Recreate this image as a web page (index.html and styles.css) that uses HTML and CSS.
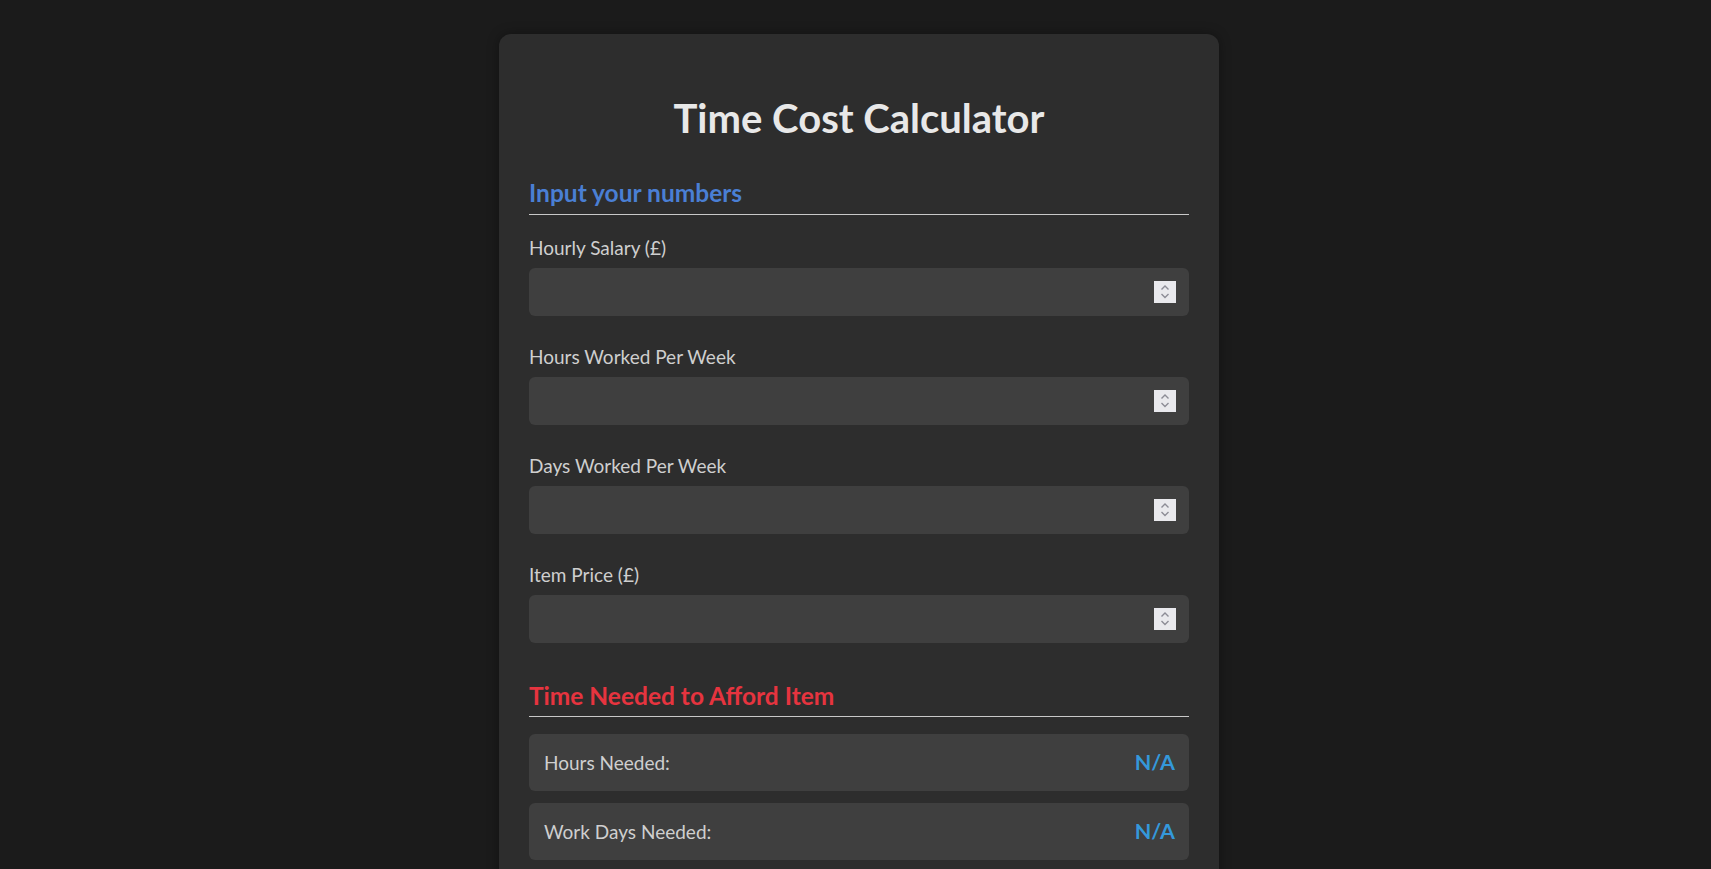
FILE: index.html
```html
<!DOCTYPE html>
<html lang="en">
<head>
<meta charset="utf-8">
<title>Time Cost Calculator</title>
<link rel="stylesheet" href="styles.css">
</head>
<body>
<main class="card">
  <h1 class="title">Time Cost Calculator</h1>

  <section class="section">
    <h2 class="section-heading heading-blue">Input your numbers</h2>

    <div class="group">
      <label class="label" for="salary">Hourly Salary (£)</label>
      <div class="field">
        <input class="field-input" id="salary" type="text">
        <svg class="spin" width="22" height="22" viewBox="0 0 22 22"><path d="M7.5 8.5 L11 5 L14.5 8.5 M7.5 13 L11 16.5 L14.5 13" fill="none" stroke="#8c8c96" stroke-width="1.4"/></svg>
      </div>
    </div>

    <div class="group">
      <label class="label" for="hours">Hours Worked Per Week</label>
      <div class="field">
        <input class="field-input" id="hours" type="text">
        <svg class="spin" width="22" height="22" viewBox="0 0 22 22"><path d="M7.5 8.5 L11 5 L14.5 8.5 M7.5 13 L11 16.5 L14.5 13" fill="none" stroke="#8c8c96" stroke-width="1.4"/></svg>
      </div>
    </div>

    <div class="group">
      <label class="label" for="days">Days Worked Per Week</label>
      <div class="field">
        <input class="field-input" id="days" type="text">
        <svg class="spin" width="22" height="22" viewBox="0 0 22 22"><path d="M7.5 8.5 L11 5 L14.5 8.5 M7.5 13 L11 16.5 L14.5 13" fill="none" stroke="#8c8c96" stroke-width="1.4"/></svg>
      </div>
    </div>

    <div class="group">
      <label class="label" for="price">Item Price (£)</label>
      <div class="field">
        <input class="field-input" id="price" type="text">
        <svg class="spin" width="22" height="22" viewBox="0 0 22 22"><path d="M7.5 8.5 L11 5 L14.5 8.5 M7.5 13 L11 16.5 L14.5 13" fill="none" stroke="#8c8c96" stroke-width="1.4"/></svg>
      </div>
    </div>
  </section>

  <section class="section results">
    <h2 class="section-heading heading-red">Time Needed to Afford Item</h2>
    <div class="result">
      <span class="result-label">Hours Needed:</span>
      <span class="result-value">N/A</span>
    </div>
    <div class="result">
      <span class="result-label">Work Days Needed:</span>
      <span class="result-value">N/A</span>
    </div>
  </section>
</main>
</body>
</html>
```

FILE: styles.css
```css
* {
  box-sizing: border-box;
}

html, body {
  margin: 0;
  padding: 0;
}

body {
  background: #1b1b1b;
  font-family: Lato, "Open Sans", "Liberation Sans", sans-serif;
  color: #cfcfcf;
  display: flex;
  justify-content: center;
  padding: 34px 0 40px 7px;
}

.card {
  width: 720px;
  background: #2d2d2d;
  border-radius: 12px;
  padding: 30px 30px 30px;
  box-shadow: 0 0 12px rgba(0, 0, 0, 0.35);
}

.title {
  margin: 30px 0 36px;
  font-size: 40px;
  line-height: 48px;
  font-weight: 700;
  text-align: center;
  color: #e8e8e8;
}

.section {
  display: flow-root;
}

.section-heading {
  margin: 0 0 21px;
  font-size: 24.5px;
  line-height: 30px;
  font-weight: 700;
  padding-bottom: 6px;
  border-bottom: 1px solid #c8c8c8;
}

.heading-blue {
  color: #4a7fd4;
}

.heading-red {
  color: #e6343f;
}

.results .section-heading {
  margin-top: 9px;
  margin-bottom: 17px;
  padding-bottom: 5px;
}

.group {
  margin-bottom: 29px;
}

.label {
  display: block;
  font-size: 19px;
  line-height: 23px;
  margin-bottom: 9px;
  color: #cfcfcf;
}

.field {
  display: flex;
  align-items: center;
  height: 48px;
  padding: 0 13px 0 12px;
  background: #3f3f3f;
  border-radius: 6px;
}

.field-input {
  flex: 1;
  min-width: 0;
  background: transparent;
  border: none;
  outline: none;
  color: #e6e6e6;
  font: inherit;
  font-size: 17px;
}

.spin {
  display: block;
  flex: none;
  background: #e9e9ed;
}

.result {
  display: flex;
  justify-content: space-between;
  align-items: center;
  padding: 18px 14px 18px 15px;
  background: #3f3f3f;
  border-radius: 6px;
  margin-bottom: 12px;
}

.result-label {
  font-size: 19px;
  line-height: 21px;
  color: #cfcfcf;
}

.result-value {
  font-size: 21.5px;
  line-height: 21px;
  font-weight: 700;
  color: #3498db;
}
```
